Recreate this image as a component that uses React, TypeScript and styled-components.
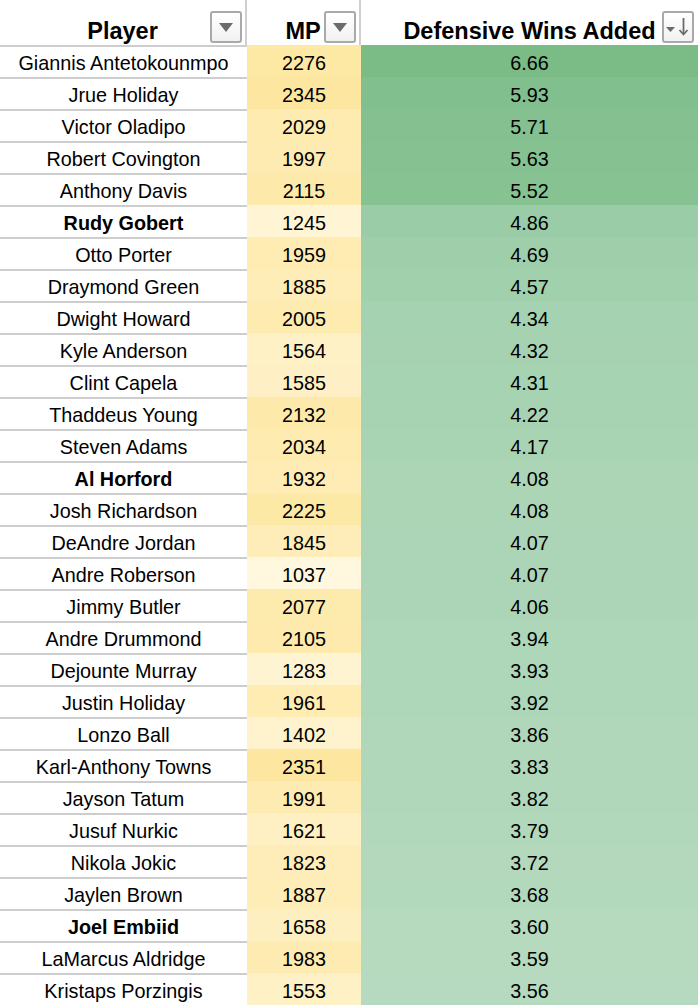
import React from "react";
import styled, { createGlobalStyle } from "styled-components";

const GlobalStyle = createGlobalStyle`
  html, body { margin: 0; padding: 0; background: #ffffff; }
  body { font-family: "Liberation Sans", Arial, Helvetica, sans-serif; color: #000; }
`;

type Player = { name: string; mp: number; dwa: number; bold?: boolean };

const players: Player[] = [
  { name: "Giannis Antetokounmpo", mp: 2276, dwa: 6.66 },
  { name: "Jrue Holiday", mp: 2345, dwa: 5.93 },
  { name: "Victor Oladipo", mp: 2029, dwa: 5.71 },
  { name: "Robert Covington", mp: 1997, dwa: 5.63 },
  { name: "Anthony Davis", mp: 2115, dwa: 5.52 },
  { name: "Rudy Gobert", mp: 1245, dwa: 4.86, bold: true },
  { name: "Otto Porter", mp: 1959, dwa: 4.69 },
  { name: "Draymond Green", mp: 1885, dwa: 4.57 },
  { name: "Dwight Howard", mp: 2005, dwa: 4.34 },
  { name: "Kyle Anderson", mp: 1564, dwa: 4.32 },
  { name: "Clint Capela", mp: 1585, dwa: 4.31 },
  { name: "Thaddeus Young", mp: 2132, dwa: 4.22 },
  { name: "Steven Adams", mp: 2034, dwa: 4.17 },
  { name: "Al Horford", mp: 1932, dwa: 4.08, bold: true },
  { name: "Josh Richardson", mp: 2225, dwa: 4.08 },
  { name: "DeAndre Jordan", mp: 1845, dwa: 4.07 },
  { name: "Andre Roberson", mp: 1037, dwa: 4.07 },
  { name: "Jimmy Butler", mp: 2077, dwa: 4.06 },
  { name: "Andre Drummond", mp: 2105, dwa: 3.94 },
  { name: "Dejounte Murray", mp: 1283, dwa: 3.93 },
  { name: "Justin Holiday", mp: 1961, dwa: 3.92 },
  { name: "Lonzo Ball", mp: 1402, dwa: 3.86 },
  { name: "Karl-Anthony Towns", mp: 2351, dwa: 3.83 },
  { name: "Jayson Tatum", mp: 1991, dwa: 3.82 },
  { name: "Jusuf Nurkic", mp: 1621, dwa: 3.79 },
  { name: "Nikola Jokic", mp: 1823, dwa: 3.72 },
  { name: "Jaylen Brown", mp: 1887, dwa: 3.68 },
  { name: "Joel Embiid", mp: 1658, dwa: 3.6, bold: true },
  { name: "LaMarcus Aldridge", mp: 1983, dwa: 3.59 },
  { name: "Kristaps Porzingis", mp: 1553, dwa: 3.56 },
];

type RGB = [number, number, number];
const mix = (a: RGB, b: RGB, t: number) => {
  const c = Math.max(0, Math.min(1, t));
  const v = a.map((x, i) => Math.round(x + (b[i] - x) * c));
  return `rgb(${v[0]}, ${v[1]}, ${v[2]})`;
};

const mpColor = (mp: number) =>
  mix([255, 247, 222], [253, 231, 160], (mp - 1037) / (2351 - 1037));

const dwaColor = (v: number) =>
  v >= 5.5
    ? mix([135, 194, 146], [122, 187, 134], (v - 5.52) / (6.66 - 5.52))
    : mix([182, 218, 191], [154, 205, 167], (v - 3.56) / (4.86 - 3.56));

const COLS = "247px 114px 1fr";

const Sheet = styled.div`
  width: 698px;
  display: flex;
  flex-direction: column;
`;

const HeaderRow = styled.div`
  display: grid;
  grid-template-columns: ${COLS};
  height: 45px;
`;

const HeaderCell = styled.div<{ $divider?: boolean }>`
  position: relative;
  display: flex;
  align-items: flex-end;
  justify-content: center;
  font-weight: 700;
  font-size: 23.5px;
  line-height: 1.15;
  box-sizing: border-box;
  border-right: ${(p) => (p.$divider ? "2px solid #cfcfcf" : "none")};
`;

const HeaderLabel = styled.span`
  display: block;
`;

const FilterButton = styled.div<{ $right: number }>`
  position: absolute;
  top: 11px;
  right: ${(p) => p.$right}px;
  width: 32px;
  height: 32px;
  box-sizing: border-box;
  border: 2px solid #a9a9a9;
  border-radius: 3px;
  background: linear-gradient(#ffffff, #f1f1f1);
  display: flex;
  align-items: center;
  justify-content: center;
`;

const Row = styled.div`
  display: grid;
  grid-template-columns: ${COLS};
  height: 32px;
`;

const NameCell = styled.div<{ $bold?: boolean; $last?: boolean }>`
  box-sizing: border-box;
  border-top: 2px solid #cdcdcd;
  border-bottom: ${(p) => (p.$last ? "2px solid #cdcdcd" : "none")};
  height: ${(p) => (p.$last ? "34px" : "32px")};
  padding-top: 1px;
  text-align: center;
  font-size: 19.8px;
  line-height: 30px;
  font-weight: ${(p) => (p.$bold ? 700 : 400)};
  white-space: nowrap;
  overflow: hidden;
`;

const NumberCell = styled.div`
  box-sizing: border-box;
  padding-top: 3px;
  text-align: center;
  font-size: 19.8px;
  line-height: 30px;
  height: 32px;
  overflow: hidden;
`;

const TriangleIcon = () => (
  <svg width="14" height="9" viewBox="0 0 14 9">
    <path d="M0 0 H14 L7 9 Z" fill="#6b6b6b" />
  </svg>
);

const SortedIcon = () => (
  <svg width="26" height="20" viewBox="0 0 26 20">
    <path d="M1 10 H10 L5.5 15 Z" fill="#6b6b6b" />
    <path d="M18.5 1 V17" stroke="#6b6b6b" strokeWidth="1.8" fill="none" />
    <path d="M14.5 13 L18.5 17.5 L22.5 13" stroke="#6b6b6b" strokeWidth="1.8" fill="none" />
  </svg>
);

export default function App() {
  return (
    <>
      <GlobalStyle />
      <Sheet>
        <HeaderRow>
          <HeaderCell $divider>
            <HeaderLabel>Player</HeaderLabel>
            <FilterButton $right={3}>
              <TriangleIcon />
            </FilterButton>
          </HeaderCell>
          <HeaderCell $divider>
            <HeaderLabel>MP</HeaderLabel>
            <FilterButton $right={3}>
              <TriangleIcon />
            </FilterButton>
          </HeaderCell>
          <HeaderCell>
            <HeaderLabel>Defensive Wins Added</HeaderLabel>
            <FilterButton $right={4}>
              <SortedIcon />
            </FilterButton>
          </HeaderCell>
        </HeaderRow>
        {players.map((p, i) => {
          const last = i === players.length - 1;
          return (
            <Row key={p.name}>
              <NameCell $bold={p.bold} $last={last}>
                {p.name}
              </NameCell>
              <NumberCell style={{ background: mpColor(p.mp) }}>{p.mp}</NumberCell>
              <NumberCell style={{ background: dwaColor(p.dwa) }}>
                {p.dwa.toFixed(2)}
              </NumberCell>
            </Row>
          );
        })}
      </Sheet>
    </>
  );
}
